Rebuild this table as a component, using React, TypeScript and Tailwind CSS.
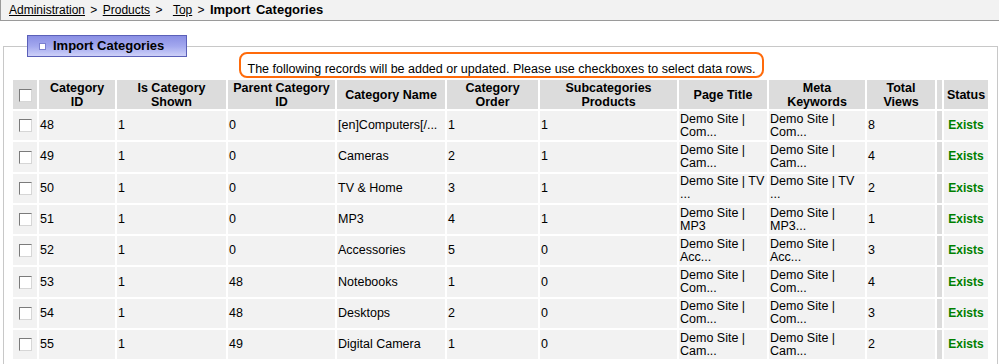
import React from 'react';

type Row = {
  id: string;
  shown: string;
  parent: string;
  name: string;
  order: string;
  subcats: string;
  title: [string, string];
  keywords: [string, string];
  views: string;
};

const rows: Row[] = [
  { id: '48', shown: '1', parent: '0', name: '[en]Computers[/...', order: '1', subcats: '1', title: ['Demo Site |', 'Com...'], keywords: ['Demo Site |', 'Com...'], views: '8' },
  { id: '49', shown: '1', parent: '0', name: 'Cameras', order: '2', subcats: '1', title: ['Demo Site |', 'Cam...'], keywords: ['Demo Site |', 'Cam...'], views: '4' },
  { id: '50', shown: '1', parent: '0', name: 'TV & Home', order: '3', subcats: '1', title: ['Demo Site | TV', '...'], keywords: ['Demo Site | TV', '...'], views: '2' },
  { id: '51', shown: '1', parent: '0', name: 'MP3', order: '4', subcats: '1', title: ['Demo Site |', 'MP3'], keywords: ['Demo Site |', 'MP3...'], views: '1' },
  { id: '52', shown: '1', parent: '0', name: 'Accessories', order: '5', subcats: '0', title: ['Demo Site |', 'Acc...'], keywords: ['Demo Site |', 'Acc...'], views: '3' },
  { id: '53', shown: '1', parent: '48', name: 'Notebooks', order: '1', subcats: '0', title: ['Demo Site |', 'Com...'], keywords: ['Demo Site |', 'Com...'], views: '4' },
  { id: '54', shown: '1', parent: '48', name: 'Desktops', order: '2', subcats: '0', title: ['Demo Site |', 'Com...'], keywords: ['Demo Site |', 'Com...'], views: '3' },
  { id: '55', shown: '1', parent: '49', name: 'Digital Camera', order: '1', subcats: '0', title: ['Demo Site |', 'Cam...'], keywords: ['Demo Site |', 'Cam...'], views: '2' },
];

const Checkbox = () => (
  <span className="inline-block w-[13px] h-[13px] border border-t-[#7b7b7b] border-l-[#7b7b7b] border-r-[#d6d6d6] border-b-[#d6d6d6] bg-white align-middle" />
);

const th = 'bg-[#dcdcdc] font-bold text-[12.5px] text-center align-middle px-[2px] leading-[14px]';
const td = 'bg-[#f2f2f2] align-middle px-[1px] text-[12.5px] leading-[13px] whitespace-nowrap overflow-hidden';

const App = () => {
  return (
    <div className="w-[999px] h-[364px] overflow-hidden bg-white text-black text-[12px] font-['Liberation_Sans',Arial,sans-serif]">
      <div className="h-[21px] bg-[#f2f2f2] border-l border-b border-[#9a9a9a] pl-[8px] pt-[3px] leading-[14px] whitespace-pre [word-spacing:2px]">
        <a className="underline">Administration</a>{' > '}
        <a className="underline">Products</a>{' >  '}
        <a className="underline">Top</a>{' > '}
        <span className="font-bold text-[13px]">Import Categories</span>
      </div>

      <fieldset className="ml-[3px] mt-[14px] w-[995px] border border-[#c8c8c8] pl-[7px] pr-[5px] pb-[10px]">
        <legend className="ml-[16px] p-0">
          <div className="w-[160px] h-[22px] flex items-center gap-[7px] pl-[11px] border border-[#5b60b8] bg-gradient-to-b from-[#8a8fe4] via-[#a2a7ee] to-[#cdd0f8]">
            <span className="w-[7px] h-[7px] bg-white border border-[#7b80d0]" />
            <span className="font-bold text-[13px] leading-[16px] text-black">Import Categories</span>
          </div>
        </legend>

        <div className="flex justify-center -mt-[5px]">
          <div className="border-2 border-[#ff6a0a] rounded-[8px] px-[7px] pt-[8px] text-[12.5px] leading-[14px] whitespace-nowrap">
            The following records will be added or updated. Please use checkboxes to select data rows.
          </div>
        </div>

        <table className="w-[979px] table-fixed border-separate border-spacing-[2px]">
          <thead>
            <tr className="h-[29px]">
              <th className={`${th} w-[24px] px-0`}><Checkbox /></th>
              <th className={`${th} w-[76px]`}>Category<br />ID</th>
              <th className={`${th} w-[109px]`}>Is Category<br />Shown</th>
              <th className={`${th} w-[107px]`}>Parent Category<br />ID</th>
              <th className={`${th} w-[108px]`}>Category Name</th>
              <th className={`${th} w-[91px]`}>Category<br />Order</th>
              <th className={`${th} w-[137px]`}>Subcategories<br />Products</th>
              <th className={`${th} w-[88px]`}>Page Title</th>
              <th className={`${th} w-[96px]`}>Meta<br />Keywords</th>
              <th className={`${th} w-[68px]`}>Total<br />Views</th>
              <th className={`${th} w-[5px] px-0`}></th>
              <th className={`${th} w-[44px] px-0`}>Status</th>
            </tr>
          </thead>
          <tbody>
            {rows.map((r) => (
              <tr key={r.id} className="h-[29.3px]">
                <td className={`${td} text-center px-0`}><Checkbox /></td>
                <td className={td}>{r.id}</td>
                <td className={td}>{r.shown}</td>
                <td className={td}>{r.parent}</td>
                <td className={td}>{r.name}</td>
                <td className={td}>{r.order}</td>
                <td className={td}>{r.subcats}</td>
                <td className={td}>{r.title[0]}<br />{r.title[1]}</td>
                <td className={td}>{r.keywords[0]}<br />{r.keywords[1]}</td>
                <td className={td}>{r.views}</td>
                <td className="bg-[#dcdcdc] p-0"></td>
                <td className={`${td} text-center px-0 font-bold text-[12px] text-[#008000]`}>Exists</td>
              </tr>
            ))}
          </tbody>
        </table>
      </fieldset>
    </div>
  );
};

export default App;
